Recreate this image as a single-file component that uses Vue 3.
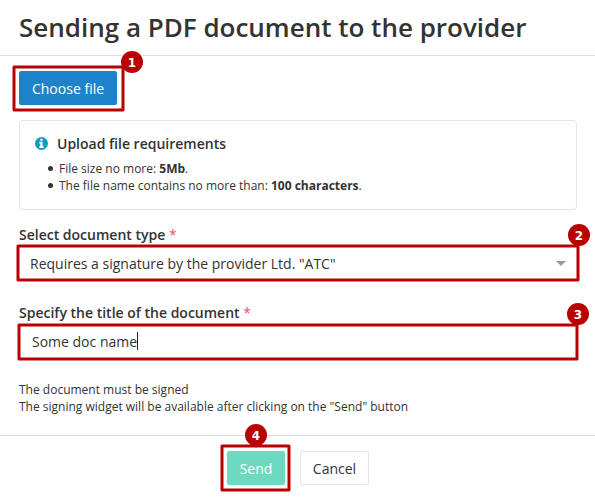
<script setup>
import { ref } from 'vue'

const fileName = ref('Some doc name')
const rules = [
  { text: 'File size no more: ', value: '5Mb' },
  { text: 'The file name contains no more than: ', value: '100 characters' },
]
</script>

<template>
  <main class="dialog">
    <header class="head">
      <h1>Sending a PDF document to the provider</h1>
    </header>

    <section class="body">
      <div class="anchor choose-wrap">
        <button class="btn choose">Choose file</button>
        <svg class="mark mark-1"><rect width="100%" height="100%" /></svg>
        <span class="badge badge-1">1</span>
      </div>

      <div class="info">
        <div class="info-head">
          <svg class="info-icon" viewBox="0 0 13 13">
            <circle cx="6.5" cy="6.5" r="6.5" fill="#0d9cbf" />
            <path d="M5.3 1.7h2.3v2H5.3zM4.3 4.8h3.3v4.4h1v1.7H4.3V9.2h1V6.4h-1z" fill="#fff" />
          </svg>
          <span>Upload file requirements</span>
        </div>
        <ul>
          <li v-for="rule in rules" :key="rule.value">{{ rule.text }}<b>{{ rule.value }}</b>.</li>
        </ul>
      </div>

      <div class="label label-type">Select document type <i>*</i></div>
      <div class="anchor field select">
        <span>Requires a signature by the provider Ltd. "ATC"</span>
        <svg class="caret" viewBox="0 0 10 5"><path d="M0 0h10L5 5z" fill="#999" /></svg>
        <svg class="mark mark-2"><rect width="100%" height="100%" /></svg>
        <span class="badge badge-2">2</span>
      </div>

      <div class="label label-title">Specify the title of the document <i>*</i></div>
      <div class="anchor field input">
        <span>{{ fileName }}</span><span class="cursor"></span>
        <svg class="mark mark-3"><rect width="100%" height="100%" /></svg>
        <span class="badge badge-3">3</span>
      </div>

      <p class="note">The document must be signed<br />The signing widget will be available after clicking on the "Send" button</p>
    </section>

    <footer class="foot">
      <div class="anchor">
        <button class="btn send">Send</button>
        <svg class="mark mark-4"><rect width="100%" height="100%" /></svg>
        <span class="badge badge-4">4</span>
      </div>
      <button class="btn cancel">Cancel</button>
    </footer>
  </main>
</template>

<style>
body {
  background: #fff;
  overflow: hidden;
}
</style>

<style scoped>
.dialog {
  box-sizing: border-box;
  height: 498px;
  overflow: hidden;
  color: #333;
  font-family: "Open Sans", "Noto Sans", sans-serif;
  font-size: 14px;
}
.dialog * { box-sizing: border-box; }
.head {
  height: 56px;
  padding: 0 19px;
  border-bottom: 1px solid #e0e0e0;
}
h1 {
  margin: 0;
  font-size: 26px;
  font-weight: 600;
  line-height: 55px;
  white-space: nowrap;
}
.body {
  height: 379px;
  padding: 15px 18px 0 19px;
}
.anchor { position: relative; }
.btn {
  display: block;
  height: 34px;
  padding: 1px 0 0;
  border: 0;
  border-radius: 2px;
  font: 14px/34px "Open Sans", "Noto Sans", sans-serif;
  color: #fff;
  text-align: center;
}
.choose-wrap { width: 98px; }
.choose { width: 98px; background: #1e83c8; }
.send { width: 58px; background: #6dd9c1; }
.cancel {
  width: 69px;
  border: 1px solid #e5e5e5;
  background: #fff;
  color: #333;
  line-height: 32px;
}
.info {
  height: 90px;
  margin-top: 15px;
  padding: 13px 15px 0;
  border: 1px solid #e4e4e4;
  border-radius: 4px;
}
.info-head {
  display: flex;
  align-items: center;
  gap: 9px;
  height: 19px;
  font-weight: 600;
}
.info-icon { width: 13px; height: 13px; }
ul {
  margin: 7px 0 0;
  padding: 0 0 0 24px;
  font-size: 12px;
  line-height: 17px;
}
li { list-style: none; position: relative; }
li::before {
  content: "";
  position: absolute;
  left: -11px;
  top: 6px;
  width: 5px;
  height: 5px;
  border-radius: 50%;
  background: #333;
}
.label {
  height: 20px;
  line-height: 20px;
  font-weight: 600;
}
.label i { color: #ed5565; font-style: normal; font-weight: 400; }
.label-type { margin-top: 15px; }
.label-title { margin-top: 22px; }
.field {
  display: flex;
  align-items: center;
  height: 36px;
}
.select { padding: 0 11px; justify-content: space-between; }
.caret { width: 10px; height: 5px; }
.input { padding-left: 13px; }
.cursor { width: 1px; height: 18px; background: #222; }
.note {
  margin: 22px 0 0;
  font-size: 12px;
  line-height: 17px;
}
.foot {
  display: flex;
  gap: 15px;
  height: 63px;
  padding: 15px 0 0 227px;
  border-top: 1px solid #e0e0e0;
}
.mark {
  position: absolute;
  overflow: visible;
  pointer-events: none;
}
.mark rect {
  fill: none;
  stroke: #b90000;
  stroke-width: 3px;
  stroke-linejoin: round;
}
.mark-1 { left: -5px; top: -4px; width: 109px; height: 43px; }
.mark-2 { left: -1px; top: 1px; width: 560px; height: 34px; }
.mark-3 { left: 0; top: 2px; width: 558px; height: 34px; }
.mark-4 { left: -5px; top: -5px; width: 67px; height: 44px; }
.badge {
  position: absolute;
  width: 22px;
  height: 22px;
  border-radius: 50%;
  background: #b90000;
  color: #fff;
  font: bold 12px/24px "DejaVu Sans", sans-serif;
  text-align: center;
}
.badge-1 { left: 102px; top: -20px; }
.badge-2 { left: 549px; top: -21px; }
.badge-3 { left: 548px; top: -20px; }
.badge-4 { left: 18px; top: -27px; }
</style>
